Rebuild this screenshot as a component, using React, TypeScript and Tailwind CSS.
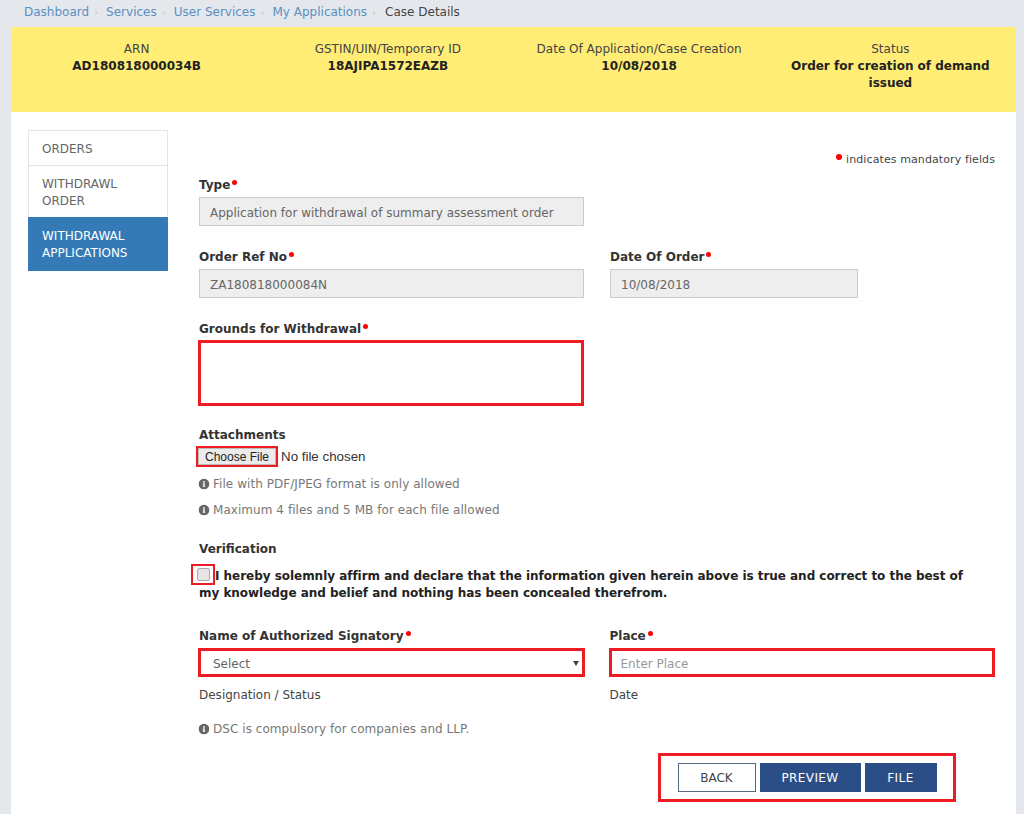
import React from 'react';
import { FaInfoCircle } from 'react-icons/fa';

const CRUMBS = ['Dashboard', 'Services', 'User Services', 'My Applications'];

const SUMMARY = [
  { label: 'ARN', value: 'AD180818000034B' },
  { label: 'GSTIN/UIN/Temporary ID', value: '18AJIPA1572EAZB' },
  { label: 'Date Of Application/Case Creation', value: '10/08/2018' },
  { label: 'Status', value: 'Order for creation of demand issued' },
];

function Label({ text, required = false }: { text: string; required?: boolean }) {
  return (
    <div className="h-[17px] pt-px font-bold text-[#333]">
      {text}
      {required && <span className="mb-[4px] ml-[2px] inline-block h-[5px] w-[5px] rounded-full bg-[#f00]" />}
    </div>
  );
}

function Hint({ text, className = '' }: { text: string; className?: string }) {
  return (
    <div className={`flex h-[17px] items-center gap-[4px] pt-[2px] tracking-[0.05px] text-[#777] ${className}`}>
      <FaInfoCircle className="h-[10px] w-[10px] -translate-y-px scale-110 text-[#666]" />
      <span>{text}</span>
    </div>
  );
}

function ReadOnlyField({ value, width }: { value: string; width: string }) {
  return (
    <div className={`mt-[4px] flex h-[29px] items-center border border-[#ccc] bg-[#eee] pl-[10px] pt-[3px] text-[#666] ${width}`}>
      {value}
    </div>
  );
}

export default function App() {
  return (
    <div className="h-[814px] w-[1024px] overflow-hidden bg-[#e4e8ec] font-['DejaVu_Sans',sans-serif] text-[12px] leading-[17px] text-[#333]">
      {/* Breadcrumb */}
      <div className="flex h-[27px] items-start pl-[24px] pt-[4px]">
        {CRUMBS.map((c) => (
          <React.Fragment key={c}>
            <span className="text-[#5a8fc2]">{c}</span>
            <span className="ml-[5px] mr-[8px] text-[10px] text-[#c4c8cc]">›</span>
          </React.Fragment>
        ))}
        <span className="ml-[1px] text-[#444]">Case Details</span>
      </div>

      <div className="ml-[11px] w-[1005px]">
        {/* Case summary */}
        <div className="grid h-[85px] grid-cols-4 bg-[#ffed76] pt-[14px] text-center">
          {SUMMARY.map((s) => (
            <div key={s.label} className="px-[8px]">
              <div className="text-[#444]">{s.label}</div>
              <div className="font-bold text-[#222]">{s.value}</div>
            </div>
          ))}
        </div>

        <div className="flex h-[702px] bg-white pl-[17px] pt-[18px]">
          {/* Side nav */}
          <div className="h-[141px] w-[140px] shrink-0 border-x border-t border-[#e4e4e4] text-[#666]">
            <div className="flex h-[35px] items-center border-b border-[#e4e4e4] pl-[13px] pt-[2px]">ORDERS</div>
            <div className="flex h-[51px] items-center pl-[13px] pt-[2px]">
              WITHDRAWL
              <br />
              ORDER
            </div>
            <div className="-mx-px flex h-[54px] items-center bg-[#337ab7] pl-[14px] pt-px text-white">
              WITHDRAWAL
              <br />
              APPLICATIONS
            </div>
          </div>

          {/* Form */}
          <div className="ml-[31px] w-[796px] pt-[21px]">
            <div className="flex h-[17px] items-center justify-end text-[11px] tracking-[0.1px] text-[#444]">
              <span className="mb-[5px] mr-[4px] inline-block h-[6px] w-[6px] rounded-full bg-[#f00]" />
              indicates mandatory fields
            </div>

            <div className="mt-[8px]">
              <Label text="Type" required />
              <ReadOnlyField value="Application for withdrawal of summary assessment order" width="w-[385px]" />
            </div>

            <div className="mt-[22px] flex gap-[26px]">
              <div>
                <Label text="Order Ref No" required />
                <ReadOnlyField value="ZA180818000084N" width="w-[385px]" />
              </div>
              <div>
                <Label text="Date Of Order" required />
                <ReadOnlyField value="10/08/2018" width="w-[248px]" />
              </div>
            </div>

            <div className="mt-[22px]">
              <Label text="Grounds for Withdrawal" required />
              <textarea className="-ml-px mt-[3px] block h-[66px] w-[386px] resize-none border-[3px] border-[#ed1c24] bg-white outline-none" />
            </div>

            <div className="mt-[20px]">
              <Label text="Attachments" />
              <div className="mt-[3px] flex h-[21px] items-center font-['Liberation_Sans',sans-serif] text-[13.33px] text-[#333]">
                <div className="-ml-[3px] flex h-[21px] w-[82px] items-center justify-center border-[2px] border-[#ed1c24]">
                  <button className="h-[17px] w-[78px] border border-[#bbb] bg-[#ebebeb] pt-px text-[12px] leading-[15px] text-[#222]">
                    Choose File
                  </button>
                </div>
                <span className="ml-[3px]">No file chosen</span>
              </div>
            </div>

            <Hint text="File with PDF/JPEG format is only allowed" className="mt-[8px]" />
            <Hint text="Maximum 4 files and 5 MB for each file allowed" className="mt-[9px]" />

            <div className="mt-[22px]">
              <Label text="Verification" />
              <div className="mt-[10px] w-[780px] pt-px font-bold tracking-[-0.035px] text-[#222]">
                <span className="-mb-px -ml-[8px] -mt-[4px] inline-flex h-[21px] w-[24px] items-center justify-center border-[2px] border-[#ed1c24] align-top">
                  <input
                    type="checkbox"
                    className="h-[13px] w-[13px] appearance-none rounded-[2px] border border-[#aaa] bg-[#e6e6e6]"
                  />
                </span>
                I hereby solemnly affirm and declare that the information given herein above is true and correct to the best of my knowledge and belief and nothing has been concealed therefrom.
              </div>
            </div>

            <div className="mt-[25px] flex">
              <div className="-ml-px w-[387px]">
                <div className="pl-px">
                  <Label text="Name of Authorized Signatory" required />
                </div>
                <div className="mt-[4px] flex h-[29px] items-center justify-between border-[3px] border-[#ed1c24] pl-[12px] pr-[3px] pt-[3px] text-[#666]">
                  Select
                  <svg width="6" height="5" viewBox="0 0 6 5" className="-translate-y-px fill-[#444]">
                    <path d="M0 0h6L3 5z" />
                  </svg>
                </div>
                <div className="mt-[9px] pl-px pt-px text-[#444]">Designation / Status</div>
              </div>
              <div className="ml-[24px] w-[387px]">
                <div className="pl-px">
                  <Label text="Place" required />
                </div>
                <input
                  placeholder="Enter Place"
                  className="mt-[4px] block h-[29px] w-full border-[3px] border-[#ed1c24] pl-[9px] pt-[2px] outline-none placeholder:text-[#999]"
                />
                <div className="mt-[9px] pl-px pt-px text-[#444]">Date</div>
              </div>
            </div>

            <Hint text="DSC is compulsory for companies and LLP." className="mt-[16px]" />

            {/* Actions */}
            <div className="ml-[459px] mt-[16px] flex h-[49px] w-[298px] items-center justify-center gap-[4px] border-[3px] border-[#ed1c24]">
              <button className="h-[29px] w-[78px] border border-[#56687f] bg-white pt-px text-[#444]">BACK</button>
              <button className="h-[29px] w-[101px] bg-[#2c4e86] pt-px tracking-[0.4px] text-white">PREVIEW</button>
              <button className="h-[29px] w-[72px] bg-[#2c4e86] pt-px tracking-[0.5px] text-white">FILE</button>
            </div>
          </div>
        </div>
      </div>
    </div>
  );
}
